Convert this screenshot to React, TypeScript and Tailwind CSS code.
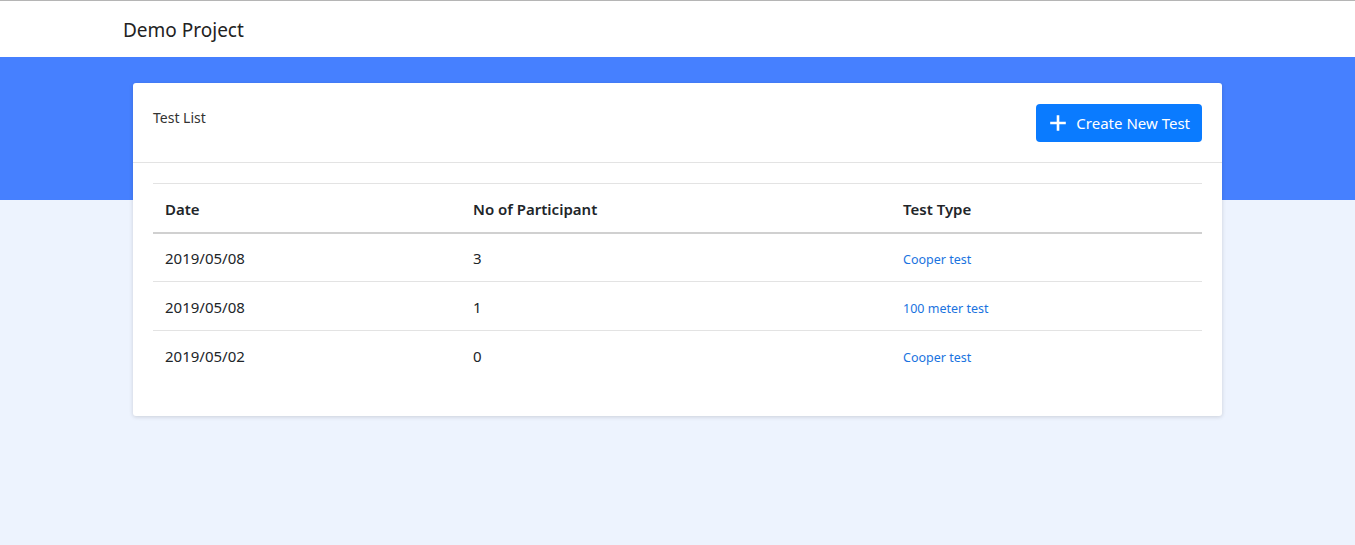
import React from "react";

const rows = [
  { date: "2019/05/08", n: "3", type: "Cooper test" },
  { date: "2019/05/08", n: "1", type: "100 meter test" },
  { date: "2019/05/02", n: "0", type: "Cooper test" },
];

export default function App() {
  return (
    <div className="min-h-[545px] bg-[#edf3fe] text-[#212529]" style={{ fontFamily: '"Noto Sans", "Open Sans", sans-serif' }}>
      <div className="h-[57px] bg-white border-t border-[#b5b5b5] flex items-center pl-[123px] pt-[3px]">
        <span className="text-[19px] text-[#222]">Demo Project</span>
      </div>
      <div className="h-[143px] bg-[#4680ff]" />
      <div className="-mt-[117px] px-[133px]">
        <div className="bg-white rounded-[3px] shadow-[0_1px_4px_rgba(0,0,0,0.15)] w-[1089px]">
          <div className="h-[80px] border-b border-[#e3e3e3] flex justify-between px-5 pt-[21px]">
            <span className="text-[14px] leading-[24px] pt-[2px] text-[#333]">Test List</span>
            <button className="h-[38px] pl-[14px] pr-3 bg-[#0a7bff] text-white rounded-[4px] flex items-center gap-[10px] text-[15px]">
              <svg width="16" height="16" viewBox="0 0 16 16">
                <path d="M8 1.5v13M1.5 8h13" stroke="white" strokeWidth="2.6" strokeLinecap="square" />
              </svg>
              Create New Test
            </button>
          </div>
          <div className="px-5 pt-5 pb-[36px]">
            <table className="w-full border-collapse text-[15px]">
              <thead>
                <tr className="border-t border-[#e3e3e3] border-b-2 border-b-[#d0d0d0]">
                  <th className="w-[308px] text-left font-semibold px-3 h-[49px] pt-[2px]">Date</th>
                  <th className="w-[430px] text-left font-semibold px-3 pt-[2px]">No of Participant</th>
                  <th className="text-left font-semibold px-3 pt-[2px]">Test Type</th>
                </tr>
              </thead>
              <tbody>
                {rows.map((r, i) => (
                  <tr key={i} className={i < rows.length - 1 ? "border-b border-[#e3e3e3]" : ""}>
                    <td className="px-3 h-[49px] pt-[2px]">{r.date}</td>
                    <td className="px-3 pt-[2px]">{r.n}</td>
                    <td className="px-3 pt-[7px] text-[12.5px] text-[#1a73e0]">{r.type}</td>
                  </tr>
                ))}
              </tbody>
            </table>
          </div>
        </div>
      </div>
    </div>
  );
}
